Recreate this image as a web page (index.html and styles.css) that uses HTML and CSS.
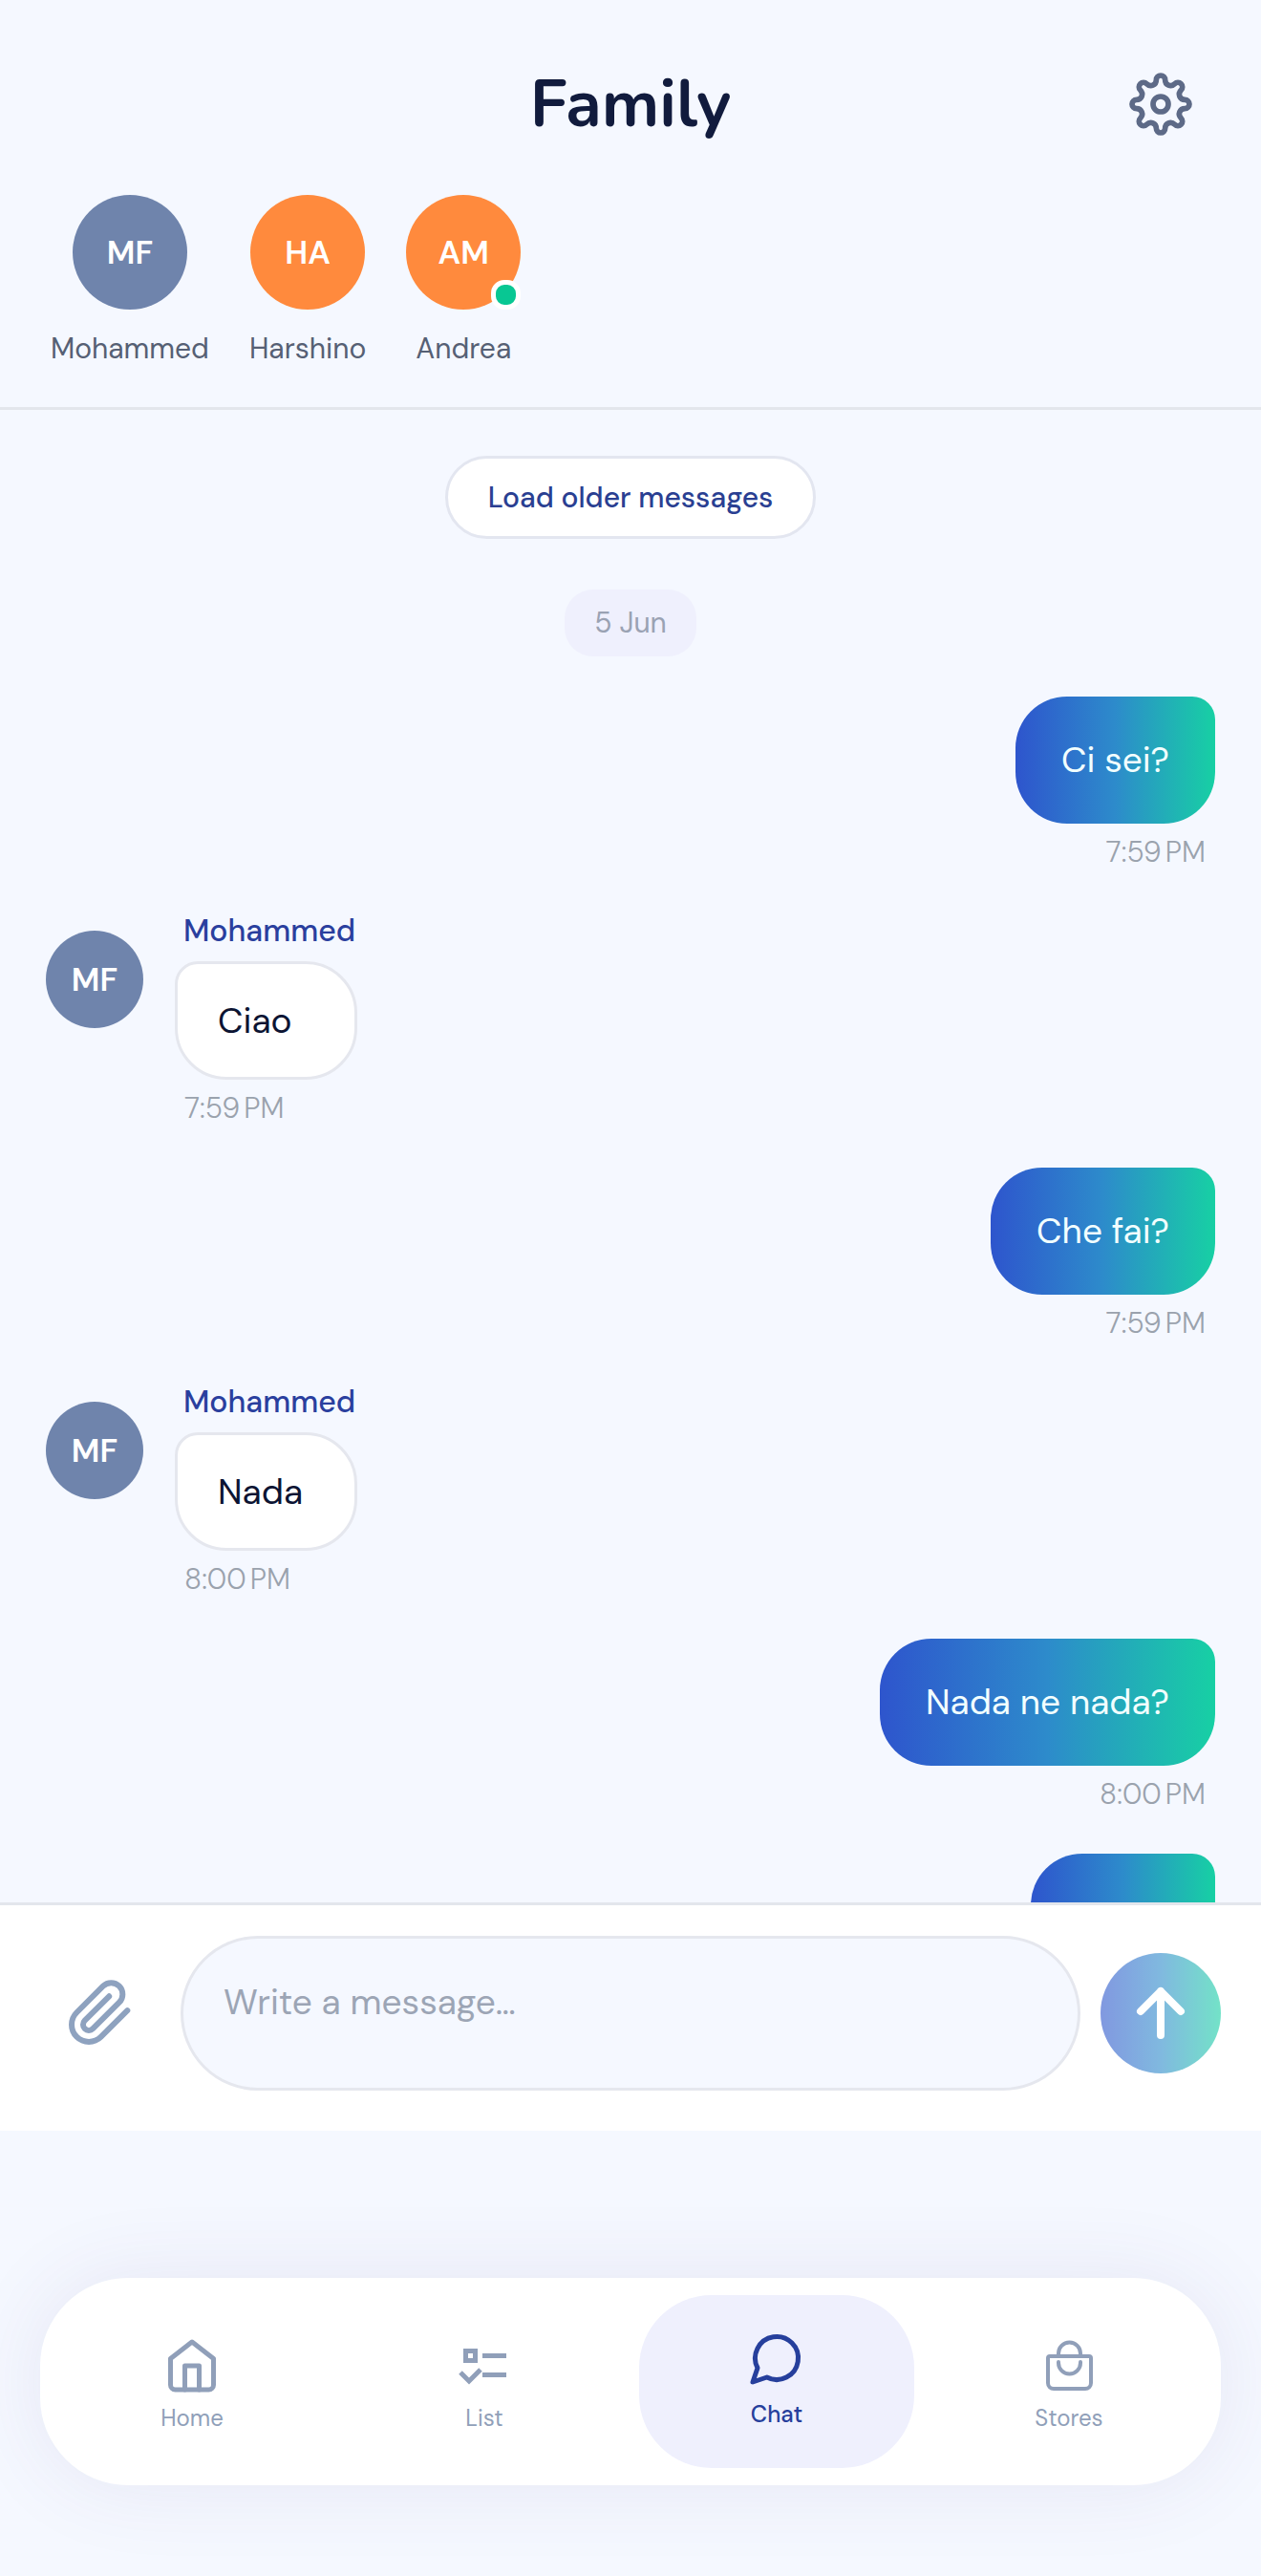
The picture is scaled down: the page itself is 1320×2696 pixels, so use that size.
FILE: index.html
```html
<!DOCTYPE html>
<html lang="en">
  <head>
    <meta charset="UTF-8" />
    <meta name="viewport" content="width=device-width, initial-scale=1.0" />
    <title>Family</title>
    <link rel="stylesheet" href="styles.css">
  </head>

  <body>
    <header class="header">
      <div class="header-bar">
        <h1>Family</h1>
        <button class="icon-button settings" type="button" aria-label="Settings">
          <svg class="gear-icon" viewBox="-99 -99 198 198" width="66" height="66">
            <circle r="24" />
            <path d="M14-76C14-60 32-52 44-64A14 14 0 0 1 64-44C52-32 60-14 76-14A14 14 0 0 1 76 14C60 14 52 32 64 44A14 14 0 0 1 44 64C32 52 14 60 14 76A14 14 0 0 1-14 76C-14 60-32 52-44 64A14 14 0 0 1-64 44C-52 32-60 14-76 14A14 14 0 0 1-76-14C-60-14-52-32-64-44A14 14 0 0 1-44-64C-32-52-14-60-14-76A14 14 0 0 1 14-76z" />
          </svg>
        </button>
      </div>
      <ul class="members">
        <li class="member">
          <span class="avatar blue">MF</span>
          <span class="member-name">Mohammed</span>
        </li>
        <li class="member">
          <span class="avatar orange">HA</span>
          <span class="member-name">Harshino</span>
        </li>
        <li class="member">
          <span class="avatar orange">AM<i class="online"></i></span>
          <span class="member-name">Andrea</span>
        </li>
      </ul>
    </header>

    <main class="chat">
      <button class="load-more" type="button">Load older messages</button>
      <div class="date">5 Jun</div>

      <div class="message sent">
        <p class="bubble">Ci sei?</p>
        <time>7:59&#8239;PM</time>
      </div>

      <div class="message received">
        <span class="avatar small blue">MF</span>
        <div class="message-body">
          <span class="sender">Mohammed</span>
          <p class="bubble">Ciao</p>
          <time>7:59&#8239;PM</time>
        </div>
      </div>

      <div class="message sent">
        <p class="bubble">Che fai?</p>
        <time>7:59&#8239;PM</time>
      </div>

      <div class="message received">
        <span class="avatar small blue">MF</span>
        <div class="message-body">
          <span class="sender">Mohammed</span>
          <p class="bubble">Nada</p>
          <time>8:00&#8239;PM</time>
        </div>
      </div>

      <div class="message sent">
        <p class="bubble">Nada ne nada?</p>
        <time>8:00&#8239;PM</time>
      </div>

      <div class="message sent">
        <p class="bubble">Allora</p>
      </div>
    </main>

    <form class="composer">
      <button class="icon-button attach" type="button" aria-label="Attach a file">
        <svg class="line-icon" viewBox="0 0 24 24" width="72" height="72">
          <path d="M21.44 11.05l-9.19 9.19a6 6 0 0 1-8.49-8.49l9.19-9.19a4 4 0 0 1 5.66 5.66l-9.2 9.19a2 2 0 0 1-2.83-2.83l8.49-8.48" />
        </svg>
      </button>
      <textarea class="message-input" rows="1" placeholder="Write a message…" aria-label="Message"></textarea>
      <button class="send" type="submit" aria-label="Send">
        <svg viewBox="0 0 60 62" width="60" height="62">
          <path d="M30 54V8M9 29L30 8l21 21" />
        </svg>
      </button>
    </form>

    <footer class="footer">
      <nav class="tabs">
        <a class="tab" href="#home">
          <svg class="line-icon" viewBox="0 0 24 24" width="60" height="60">
            <path d="M3 9l9-7 9 7v11a2 2 0 0 1-2 2H5a2 2 0 0 1-2-2z" />
            <path d="M9 22V12h6v10" />
          </svg>
          <span>Home</span>
        </a>
        <a class="tab" href="#list">
          <svg class="list-icon" viewBox="0 0 60 60" width="60" height="60">
            <rect x="10.5" y="14.5" width="10" height="10" />
            <path d="M28 19.500h25M28 39.500h25M5 37l9 9 12-12" />
          </svg>
          <span>List</span>
        </a>
        <a class="tab active" href="#chat">
          <svg class="line-icon" viewBox="0 0 24 24" width="60" height="60">
            <path d="M7.9 20A9 9 0 1 0 4 16.1L2 22Z" />
          </svg>
          <span>Chat</span>
        </a>
        <a class="tab" href="#stores">
          <svg class="bag-icon" viewBox="0 0 60 60" width="60" height="60">
            <path d="M19 20v-3a11.5 11.5 0 0 1 23 0v3" />
            <path d="M10 20h41a2 2 0 0 1 2 2v26a6 6 0 0 1-6 6H14a6 6 0 0 1-6-6V22a2 2 0 0 1 2-2z" />
            <path d="M19 26v1a11.5 11.5 0 0 0 23 0v-1" />
          </svg>
          <span>Stores</span>
        </a>
      </nav>
    </footer>
  </body>
</html>
```
FILE: styles.css
```css
* {
  box-sizing: border-box;
}

body {
  margin: 0;
  height: 100vh;
  display: flex;
  flex-direction: column;
  background-color: #f5f8ff;
  color: #0c1433;
  font-family: "DM Sans", Inter, sans-serif;
  font-size: 30px;
}

button,
textarea {
  font-family: inherit;
}

button {
  border: none;
  padding: 0;
  cursor: pointer;
}

.icon-button {
  display: flex;
  align-items: center;
  justify-content: center;
  background: none;
}

.line-icon {
  fill: none;
  stroke: currentColor;
  stroke-width: 2;
  stroke-linecap: round;
  stroke-linejoin: round;
}

/* Header */
.header {
  border-bottom: 3px solid #e3e6ec;
  padding-bottom: 43px;
}

.header-bar {
  display: grid;
  grid-template-columns: 1fr auto 1fr;
  align-items: center;
  padding: 64px 72px 50px;
}

.header-bar h1 {
  grid-column: 2;
  margin: 0;
  font-family: Nunito, Lato, sans-serif;
  font-size: 69px;
  line-height: 90px;
  font-weight: 700;
  color: #111b3d;
}

.settings {
  justify-self: end;
  color: #5d6a87;
}

.gear-icon {
  fill: none;
  stroke: currentColor;
  stroke-width: 17;
}

.members {
  display: flex;
  gap: 42px;
  margin: 0;
  padding: 0 53px;
  list-style: none;
}

.member {
  display: flex;
  flex-direction: column;
  align-items: center;
  gap: 23px;
}

.member-name {
  line-height: 36px;
  color: #566074;
}

.avatar {
  position: relative;
  display: flex;
  align-items: center;
  justify-content: center;
  width: 120px;
  height: 120px;
  border-radius: 50%;
  color: #fff;
  font-size: 34px;
  font-weight: 600;
}

.avatar.small {
  flex: none;
  width: 102px;
  height: 102px;
  margin-top: 20px;
}

.blue {
  background-color: #6f84ac;
}

.orange {
  background-color: #ff8a3d;
}

.online {
  position: absolute;
  right: 0;
  bottom: 0;
  width: 31px;
  height: 31px;
  border: 5px solid #fff;
  border-radius: 14px;
  background-color: #08c793;
}

/* Conversation */
.chat {
  flex: 1;
  min-height: 0;
  overflow: hidden;
  display: flex;
  flex-direction: column;
  padding: 48px 48px 0;
}

.chat > * {
  flex: none;
}

.load-more {
  align-self: center;
  padding: 22px 42px;
  border: 3px solid #e3e6f0;
  border-radius: 44px;
  background-color: #fff;
  color: #2a3f92;
  font-size: 30px;
  line-height: 37px;
  font-weight: 500;
}

.date {
  align-self: center;
  margin: 53px 0 42px;
  padding: 17px 31px;
  border-radius: 30px;
  background-color: #eff0fd;
  color: #9aa2b3;
  line-height: 36px;
}

.message {
  display: flex;
  margin-bottom: 44px;
}

.sent {
  flex-direction: column;
  align-items: flex-end;
}

.received {
  gap: 33px;
}

.message-body {
  display: flex;
  flex-direction: column;
}

.sender {
  margin-bottom: 12px;
  padding: 0 2px 0 9px;
  color: #2a3f9e;
  font-size: 32px;
  line-height: 40px;
  font-weight: 500;
}

.bubble {
  margin: 0;
  font-size: 37px;
  line-height: 53px;
}

.sent .bubble {
  padding: 40px 48px;
  border-radius: 54px 24px 54px 54px;
  background-image: linear-gradient(90deg, #2e55cd, #2d8bcb 50%, #17d0a4);
  color: #f2ffff;
}

.received .bubble {
  padding: 33px 42px 32px;
  border: 3px solid #e5e7ee;
  border-radius: 24px 54px 54px 54px;
  background-color: #fff;
}

time {
  margin-top: 12px;
  padding: 0 10px;
  color: #9aa2ad;
  font-weight: 300;
  line-height: 36px;
}

/* Message box */
.composer {
  display: flex;
  align-items: center;
  gap: 21px;
  padding: 32px 42px 42px;
  border-top: 3px solid #e3e6ec;
  background-color: #fff;
}

.attach {
  width: 126px;
  height: 126px;
  color: #8ea2bf;
}

.message-input {
  flex: 1;
  min-width: 0;
  height: 162px;
  padding: 39px 42px;
  border: 3px solid #e5e7ee;
  border-radius: 81px;
  background-color: #f5f8ff;
  font-size: 37px;
  line-height: 54px;
  resize: none;
}

.message-input::placeholder {
  color: #9ca5b5;
  opacity: 1;
}

.send {
  display: flex;
  align-items: center;
  justify-content: center;
  width: 126px;
  height: 126px;
  border-radius: 50%;
  background-image: linear-gradient(90deg, #2e55cd, #2d8bcb 50%, #17d0a4);
  opacity: 0.6;
}

.send svg {
  fill: none;
  stroke: #fff;
  stroke-width: 8;
  stroke-linecap: round;
  stroke-linejoin: round;
}

/* Bottom tabs */
.footer {
  padding: 154px 42px 95px;
}

.tabs {
  display: flex;
  gap: 18px;
  padding: 18px 15px;
  border-radius: 92px;
  background-color: #fff;
  box-shadow: 0 0 90px rgba(80, 60, 130, 0.09);
}

.tab {
  flex: 1;
  display: flex;
  flex-direction: column;
  align-items: center;
  justify-content: center;
  gap: 10px;
  height: 181px;
  padding-top: 6px;
  border-radius: 76px;
  color: #909fb9;
  font-size: 24px;
  line-height: 30px;
  text-decoration: none;
}

.tab.active {
  gap: 14px;
  padding: 0 0 6px;
  background-color: #eff0fd;
  color: #263f9c;
  font-weight: 500;
}

.list-icon {
  fill: none;
  stroke: currentColor;
  stroke-width: 5;
}

.bag-icon {
  fill: none;
  stroke: currentColor;
  stroke-width: 4;
  stroke-linecap: round;
}
```
